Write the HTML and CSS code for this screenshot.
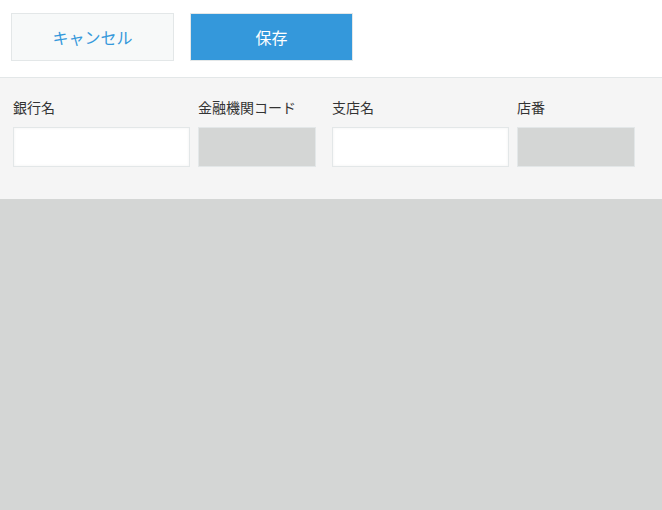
FILE: index.html
```html
<!DOCTYPE html>
<html lang="ja">
<head>
  <meta charset="UTF-8">
  <title>口座情報</title>
  <link rel="stylesheet" href="styles.css">
</head>
<body>
  <div class="toolbar">
    <button class="btn btn-cancel" type="button">キャンセル</button>
    <button class="btn btn-save" type="button">保存</button>
  </div>
  <div class="panel">
    <div class="pair">
      <div class="field">
        <label class="label">銀行名</label>
        <input class="input input-wide" type="text">
      </div>
      <div class="field">
        <label class="label">金融機関コード</label>
        <div class="input input-narrow input-disabled"></div>
      </div>
    </div>
    <div class="pair">
      <div class="field">
        <label class="label">支店名</label>
        <input class="input input-wide" type="text">
      </div>
      <div class="field">
        <label class="label">店番</label>
        <div class="input input-narrow input-disabled"></div>
      </div>
    </div>
  </div>
</body>
</html>
```

FILE: styles.css
```css
body {
  margin: 0;
  background: #d4d6d5;
  font-family: "Noto Sans CJK JP", "Noto Sans", sans-serif;
  font-size: 14px;
  color: #333;
}
.toolbar {
  display: flex;
  gap: 16px;
  height: 64px;
  padding: 13px 11px 0;
  background: #fff;
  border-bottom: 1px solid #e3e7e8;
}
.btn {
  width: 163px;
  height: 48px;
  font-family: inherit;
  font-size: 16px;
  border: 1px solid #e3e7e8;
  padding: 0;
  cursor: pointer;
}
.btn-cancel {
  background: #f7f9f9;
  color: #3498db;
}
.btn-save {
  background: #3498db;
  color: #fff;
}
.panel {
  display: flex;
  gap: 16px;
  height: 121px;
  padding: 19px 13px 0;
  box-sizing: border-box;
  background: #f5f5f5;
}
.pair {
  display: flex;
  gap: 8px;
}
.field {
  display: flex;
  flex-direction: column;
}
.label {
  line-height: 20px;
  margin-bottom: 10px;
  white-space: nowrap;
}
.input {
  height: 40px;
  margin: 0;
  box-sizing: border-box;
  border: 1px solid #e3e7e8;
  background: #fff;
  box-shadow: inset 0 0 3px rgba(0, 0, 0, 0.06);
  font-family: inherit;
  font-size: 14px;
}
.input-wide {
  width: 177px;
}
.input-narrow {
  width: 118px;
}
.input-disabled {
  background: #d4d6d5;
  box-shadow: none;
}
```
